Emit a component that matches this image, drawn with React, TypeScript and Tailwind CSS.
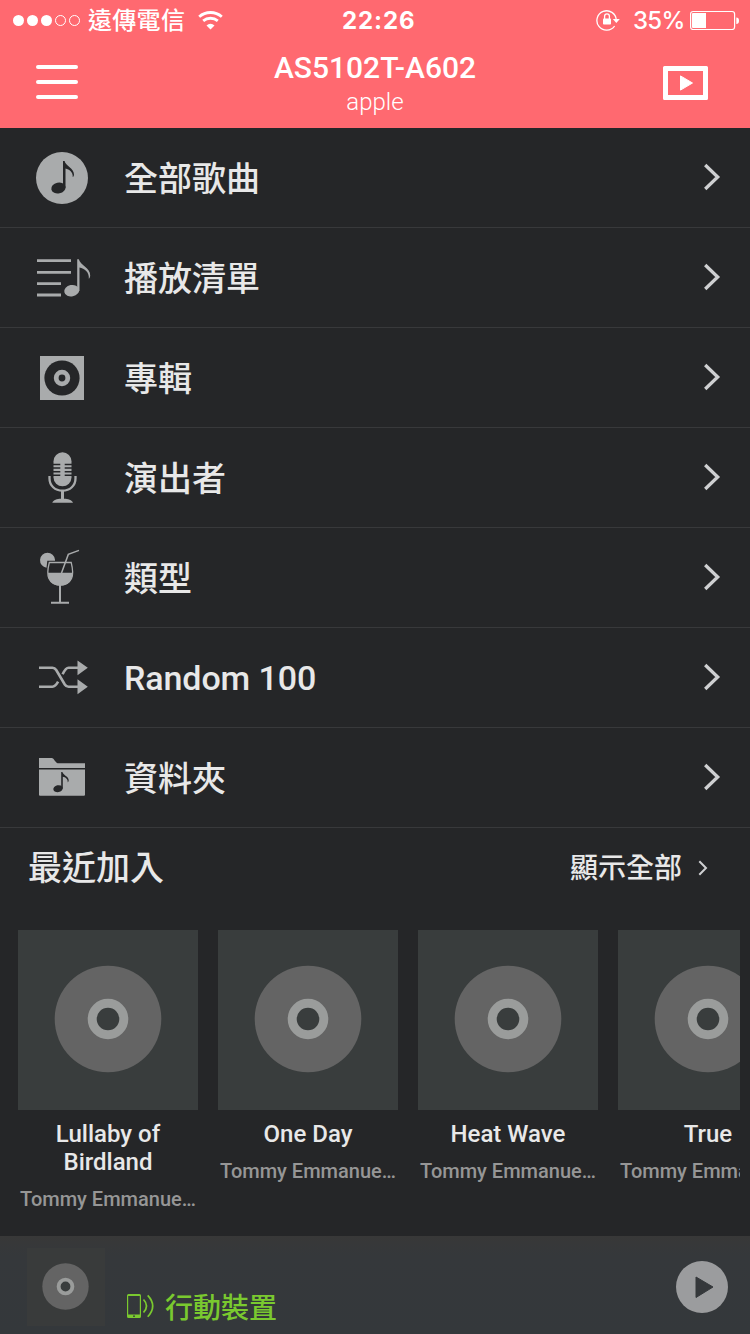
import React from 'react';

type IconName = 'songs' | 'playlist' | 'album' | 'artist' | 'genre' | 'random' | 'folder';

const menuItems: { label: string; icon: IconName }[] = [
  { label: '全部歌曲', icon: 'songs' },
  { label: '播放清單', icon: 'playlist' },
  { label: '專輯', icon: 'album' },
  { label: '演出者', icon: 'artist' },
  { label: '類型', icon: 'genre' },
  { label: 'Random 100', icon: 'random' },
  { label: '資料夾', icon: 'folder' },
];

const recentAlbums = [
  { title: 'Lullaby of Birdland', artist: 'Tommy Emmanue…' },
  { title: 'One Day', artist: 'Tommy Emmanue…' },
  { title: 'Heat Wave', artist: 'Tommy Emmanue…' },
  { title: 'True', artist: 'Tommy Emmanue…' },
];

const GREY = '#a9abac';
const DARK = '#252628';

const iconShapes: Record<IconName, React.ReactNode> = {
  songs: (
    <>
      <circle cx="62" cy="50" r="26" fill={GREY} />
      <ellipse cx="58.4" cy="60" rx="7.2" ry="5.4" transform="rotate(-12 58.4 60)" fill={DARK} />
      <path d="M63 33h1.600c.8 4.600 9.600 7.500 9.400 13.500-.1 1.400-.6 2.300-1.300 2.500.5-5-3.400-7.800-7.200-8.600V60H63z" fill={DARK} />
    </>
  ),
  playlist: (
    <>
      <path d="M37 32.700h34M37 44.300h34M37 55.700h24M37 67h24" stroke={GREY} strokeWidth="2.800" />
      <ellipse cx="71.700" cy="62.700" rx="7.500" ry="5.700" transform="rotate(-12 71.700 62.700)" fill={GREY} />
      <path d="M77.200 31.200h1.600c1.400 5.800 11.600 8.500 11.400 16.300-.1 1.600-.6 2.800-1.400 3.300.8-6.600-4.500-10.600-9.300-11.400V63h-2.300z" fill={GREY} />
    </>
  ),
  album: (
    <>
      <path d="M40 28h44v44H40z" fill={GREY} />
      <circle cx="62" cy="50" r="17.600" fill={DARK} />
      <circle cx="62" cy="50" r="5.800" fill="none" stroke={GREY} strokeWidth="4.800" />
    </>
  ),
  artist: (
    <>
      <rect x="53.500" y="24.300" width="18" height="34" rx="9" fill={GREY} />
      <path d="M53 36.400h7.300M53 40.100h7.300M53 43.700h7.300M53 47.300h7.300M64.700 36.400H72M64.700 40.100H72M64.700 43.700H72M64.700 47.300H72" stroke={DARK} strokeWidth="1.500" />
      <path d="M49.500 48v2.500c0 7 5.500 12.200 13 12.200s13-5.200 13-12.200V48" fill="none" stroke={GREY} strokeWidth="2.300" />
      <path d="M61 62h3v8.800c4 .2 8 1.200 9 3.900H52.300c1-2.700 4.700-3.700 8.700-3.900z" fill={GREY} />
    </>
  ),
  genre: (
    <>
      <path d="M55 31.700A7.500 7.500 0 1 0 46.500 39.700L47.300 32.700H55z" fill={GREY} />
      <path d="M49.300 34.500h21.900c2 8 2.200 12 .3 16-1.900 4-6 6.500-11.300 6.500s-9.400-2.500-11.300-6.500c-1.900-4-1.600-8 .4-16z" fill="none" stroke={GREY} strokeWidth="1.300" />
      <path d="M48 44.700h24.500c0 8-4.500 12.900-12.300 12.900S48 52.700 48 44.700z" fill={GREY} />
      <path d="M61.500 45l6.800-18.600L79 22.400" fill="none" stroke={GREY} strokeWidth="1.500" />
      <path d="M60 57v17M51 74.700h18" stroke={GREY} strokeWidth="2" />
    </>
  ),
  random: (
    <>
      <path d="M39 39.700h13.500c2 0 2.700.7 3.700 2.300l8.600 14.500c1 1.600 1.700 2.200 3.700 2.200H78" fill="none" stroke={GREY} strokeWidth="2.600" />
      <path d="M39 58.700h13.500c2.500 0 3.700-1.700 5.600-5M62.600 46.300c2.200-4.700 3.600-6.600 6-6.600H78" fill="none" stroke={GREY} strokeWidth="2.600" />
      <path d="M77.500 32.400l10.300 7.400-10.300 7.400zM77.500 51.300l10.300 7.500-10.300 7.500z" fill={GREY} />
    </>
  ),
  folder: (
    <>
      <path d="M39 30h12.500c3 0 3.500 5.300 7 5.300H85V40H39zM39 41.400h46v25c0 .8-.5 1.300-1.300 1.300H40.300c-.8 0-1.300-.5-1.300-1.300z" fill={GREY} />
      <ellipse cx="58" cy="60.700" rx="4.700" ry="3.500" transform="rotate(-12 58 60.700)" fill={DARK} />
      <path d="M61.200 44h1.200c.6 3 6.500 4.600 6.300 8.300-.1 1.200-.4 1.700-1 2 .3-3.400-2.300-5-4.900-5.500v12h-1.600z" fill={DARK} />
    </>
  ),
};

const Disc: React.FC<{ className: string }> = ({ className }) => (
  <svg viewBox="0 0 108 108" className={className}>
    <circle cx="54" cy="54" r="53.300" fill="#646464" />
    <circle cx="54" cy="54" r="15.800" fill="#393d3d" stroke="#9a9c9b" strokeWidth="9" />
  </svg>
);

const StatusBar: React.FC = () => (
  <div className="flex h-10 items-center text-white">
    <svg width="70" height="12" viewBox="0 0 70 12" className="ml-3 shrink-0">
      <g fill="white">
        <circle cx="6.500" cy="6.500" r="5.500" />
        <circle cx="20.500" cy="6.500" r="5.500" />
        <circle cx="34.500" cy="6.500" r="5.500" />
      </g>
      <g fill="none" stroke="white">
        <circle cx="48.500" cy="6.500" r="5" />
        <circle cx="62.500" cy="6.500" r="5" />
      </g>
    </svg>
    <span className="ml-1.5 w-[98px] pt-0.5 text-2xl font-medium tracking-[0.3px] whitespace-nowrap">遠傳電信</span>
    <svg width="26" height="20" viewBox="0 0 26 20" className="ml-3 shrink-0">
      <path d="M1.200 6.800a17 17 0 0 1 22.600 0M5.200 10.900a11.300 11.300 0 0 1 14.600 0" fill="none" stroke="white" strokeWidth="2.800" />
      <path d="M12.500 19.500l-4-4.100a6 6 0 0 1 8 0z" fill="white" />
    </svg>
    <span className="ml-[118px] w-[74px] pt-0.5 font-['Inter'] text-2xl font-bold tracking-[0.9px]">22:26</span>
    <svg width="24" height="22" viewBox="0 0 24 22" className="ml-[180px] shrink-0">
      <path d="M18.600 17A9.700 9.700 0 1 1 20.300 11" fill="none" stroke="white" strokeWidth="1.300" />
      <path d="M16.800 10h7L20.300 14z" fill="white" />
      <rect x="7" y="9.500" width="8" height="6" rx=".8" fill="white" />
      <path d="M8.600 10V7.300a2.400 2.400 0 0 1 4.800 0V10" fill="none" stroke="white" strokeWidth="1.300" />
    </svg>
    <span className="ml-[13px] w-[51px] pt-0.5 font-['Inter'] text-2xl font-medium tracking-[-0.7px]">35%</span>
    <svg width="50" height="20" viewBox="0 0 50 20" className="ml-1.5 shrink-0">
      <rect x=".6" y="1.500" width="44" height="18" rx="2.500" fill="none" stroke="white" strokeWidth="1.200" />
      <path d="M2 4Q2 3 3 3H16v15H3Q2 18 2 17zM46.300 7.500Q49 7.500 49 10.700T46.300 14z" fill="white" />
    </svg>
  </div>
);

const Header: React.FC = () => (
  <header className="h-32 bg-[#ff6970]">
    <StatusBar />
    <div className="flex h-[88px] items-start pr-[42px] pl-9 text-white">
      <button className="mt-[25px] flex w-[42px] flex-col gap-[11px]">
        <span className="h-1 w-full rounded-full bg-white" />
        <span className="h-1 w-full rounded-full bg-white" />
        <span className="h-1 w-full rounded-full bg-white" />
      </button>
      <div className="mt-2.5 grow pl-[9px] text-center">
        <h1 className="text-[30px] leading-9 font-medium">AS5102T-A602</h1>
        <p className="text-2xl leading-8 font-light">apple</p>
      </div>
      <svg width="45" height="34" viewBox="0 0 45 34" className="mt-[26px]">
        <path d="M1.500 0h42Q45 0 45 1.500v31Q45 34 43.500 34h-42Q0 34 0 32.500v-31Q0 0 1.500 0zM5 5v24h35V5z" fill="white" fillRule="evenodd" />
        <path d="M17.500 9.900l12 7.100-12 7.100z" fill="white" stroke="white" strokeLinejoin="round" />
      </svg>
    </div>
  </header>
);

export default function App() {
  return (
    <div className="flex h-[1334px] w-[750px] flex-col overflow-hidden bg-[#252628] font-['Roboto','Noto_Sans_CJK_TC',sans-serif] text-[#e8e8e8]">
      <Header />

      <nav>
        {menuItems.map((item) => (
          <div key={item.icon} className="flex h-[100px] items-center border-b border-[#38393b] pr-7 pl-8">
            <svg width="60" height="99" viewBox="32 0 60 99" className="shrink-0">
              {iconShapes[item.icon]}
            </svg>
            <span className={`ml-8 grow text-[34px] leading-none font-medium ${item.icon === 'random' ? 'tracking-[-0.1px]' : 'pt-0.5'}`}>
              {item.label}
            </span>
            <svg width="18" height="28" viewBox="0 0 18 28" className="mb-0.5">
              <path d="M1.200 2l12.500 12L1.200 26" fill="none" stroke="#cfd0d2" strokeWidth="3.300" />
            </svg>
          </div>
        ))}
      </nav>

      <section>
        <div className="flex h-20 items-center pr-[42px] pl-7">
          <h2 className="grow text-[34px] leading-none font-medium">最近加入</h2>
          <span className="pt-0.5 text-[28px] leading-none font-medium">顯示全部</span>
          <svg width="10" height="16" viewBox="0 0 10 16" className="ml-4">
            <path d="M1.300 1.200L8 8l-6.700 6.800" fill="none" stroke="#cfd0d2" strokeWidth="2" />
          </svg>
        </div>
        <div className="mt-[22px] mr-2.5 flex h-[306px] gap-5 overflow-hidden pl-[18px]">
          {recentAlbums.map((album) => (
            <div key={album.title} className="w-[180px] shrink-0 text-center">
              <div className="flex h-[180px] items-center justify-center bg-[#393d3d] pb-0.5">
                <Disc className="size-[108px]" />
              </div>
              <h3 className="mt-2.5 px-5 text-2xl leading-7 font-medium">{album.title}</h3>
              <p className="mt-[9px] text-xl leading-7 font-medium whitespace-nowrap text-[#969696]">{album.artist}</p>
            </div>
          ))}
        </div>
      </section>

      <footer className="flex h-[98px] items-start bg-linear-to-b from-[#383838] via-[#35383b] via-20% to-[#34383b] pr-[22px] pl-[27px]">
        <div className="mt-3 flex size-[78px] items-center justify-center bg-[#393b3b] pr-0.5 pb-0.5">
          <Disc className="size-[47px]" />
        </div>
        <svg width="30" height="26" viewBox="0 0 30 26" className="mt-[57px] ml-[21px]">
          <path d="M3 1h10.500Q15 1 15 2.500v21Q15 25 13.500 25H2.500Q1 25 1 23.500v-21Q1 1 2.500 1zM2.200 3v18.500h11.600V3z" fill="#7ac92f" fillRule="evenodd" />
          <circle cx="8" cy="23.200" r=".9" fill="#35383b" />
          <path d="M17.500 6.500q6 6.300 0 13M21.700 2.300q10 10.500 0 21.500" fill="none" stroke="#7ac92f" strokeWidth="1.700" />
        </svg>
        <span className="mt-[59px] ml-[9px] grow text-[28px] leading-7 font-medium text-[#7ac92f]">行動裝置</span>
        <svg width="52" height="52" viewBox="0 0 52 52" className="mt-[25px]">
          <circle cx="26" cy="26" r="26" fill="#9b9c9e" />
          <path d="M20 16l17 10-17 10.500z" fill="#35383b" stroke="#35383b" strokeLinejoin="round" />
        </svg>
      </footer>
    </div>
  );
}
